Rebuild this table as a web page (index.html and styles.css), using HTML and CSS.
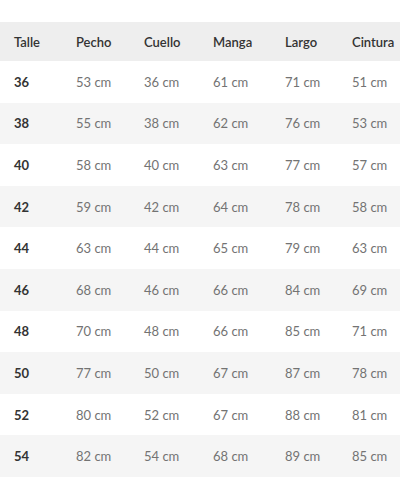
FILE: index.html
```html
<!DOCTYPE html>
<html>
<head>
<meta charset="utf-8">
<link rel="stylesheet" href="styles.css">
</head>
<body>
<div class="table">
  <div class="row head">
    <div class="c">Talle</div><div class="c">Pecho</div><div class="c">Cuello</div><div class="c">Manga</div><div class="c">Largo</div><div class="c">Cintura</div>
  </div>
  <div class="row"><div class="c k">36</div><div class="c">53 cm</div><div class="c">36 cm</div><div class="c">61 cm</div><div class="c">71 cm</div><div class="c">51 cm</div></div>
  <div class="row alt"><div class="c k">38</div><div class="c">55 cm</div><div class="c">38 cm</div><div class="c">62 cm</div><div class="c">76 cm</div><div class="c">53 cm</div></div>
  <div class="row"><div class="c k">40</div><div class="c">58 cm</div><div class="c">40 cm</div><div class="c">63 cm</div><div class="c">77 cm</div><div class="c">57 cm</div></div>
  <div class="row alt"><div class="c k">42</div><div class="c">59 cm</div><div class="c">42 cm</div><div class="c">64 cm</div><div class="c">78 cm</div><div class="c">58 cm</div></div>
  <div class="row"><div class="c k">44</div><div class="c">63 cm</div><div class="c">44 cm</div><div class="c">65 cm</div><div class="c">79 cm</div><div class="c">63 cm</div></div>
  <div class="row alt"><div class="c k">46</div><div class="c">68 cm</div><div class="c">46 cm</div><div class="c">66 cm</div><div class="c">84 cm</div><div class="c">69 cm</div></div>
  <div class="row"><div class="c k">48</div><div class="c">70 cm</div><div class="c">48 cm</div><div class="c">66 cm</div><div class="c">85 cm</div><div class="c">71 cm</div></div>
  <div class="row alt"><div class="c k">50</div><div class="c">77 cm</div><div class="c">50 cm</div><div class="c">67 cm</div><div class="c">87 cm</div><div class="c">78 cm</div></div>
  <div class="row"><div class="c k">52</div><div class="c">80 cm</div><div class="c">52 cm</div><div class="c">67 cm</div><div class="c">88 cm</div><div class="c">81 cm</div></div>
  <div class="row alt"><div class="c k">54</div><div class="c">82 cm</div><div class="c">54 cm</div><div class="c">68 cm</div><div class="c">89 cm</div><div class="c">85 cm</div></div>
</div>
</body>
</html>
```
FILE: styles.css
```css
html, body {
  margin: 0;
  padding: 0;
  background: #fff;
}
body {
  padding-top: 22px;
  font-family: "Lato", "Open Sans", sans-serif;
  font-size: 13px;
  color: #737373;
}
.table {
  display: flex;
  flex-direction: column;
}
.row {
  display: grid;
  grid-template-columns: 62px 68px 69px 72px 67px 62px;
  height: 41.6px;
  align-items: center;
}
.row.head {
  height: 39px;
  background: #eeeeee;
  color: #333;
  font-weight: 600;
}
.row.alt {
  background: #f5f5f5;
}
.c {
  padding-left: 14px;
  white-space: nowrap;
}
.c.k {
  color: #333;
  font-weight: 700;
}
```
